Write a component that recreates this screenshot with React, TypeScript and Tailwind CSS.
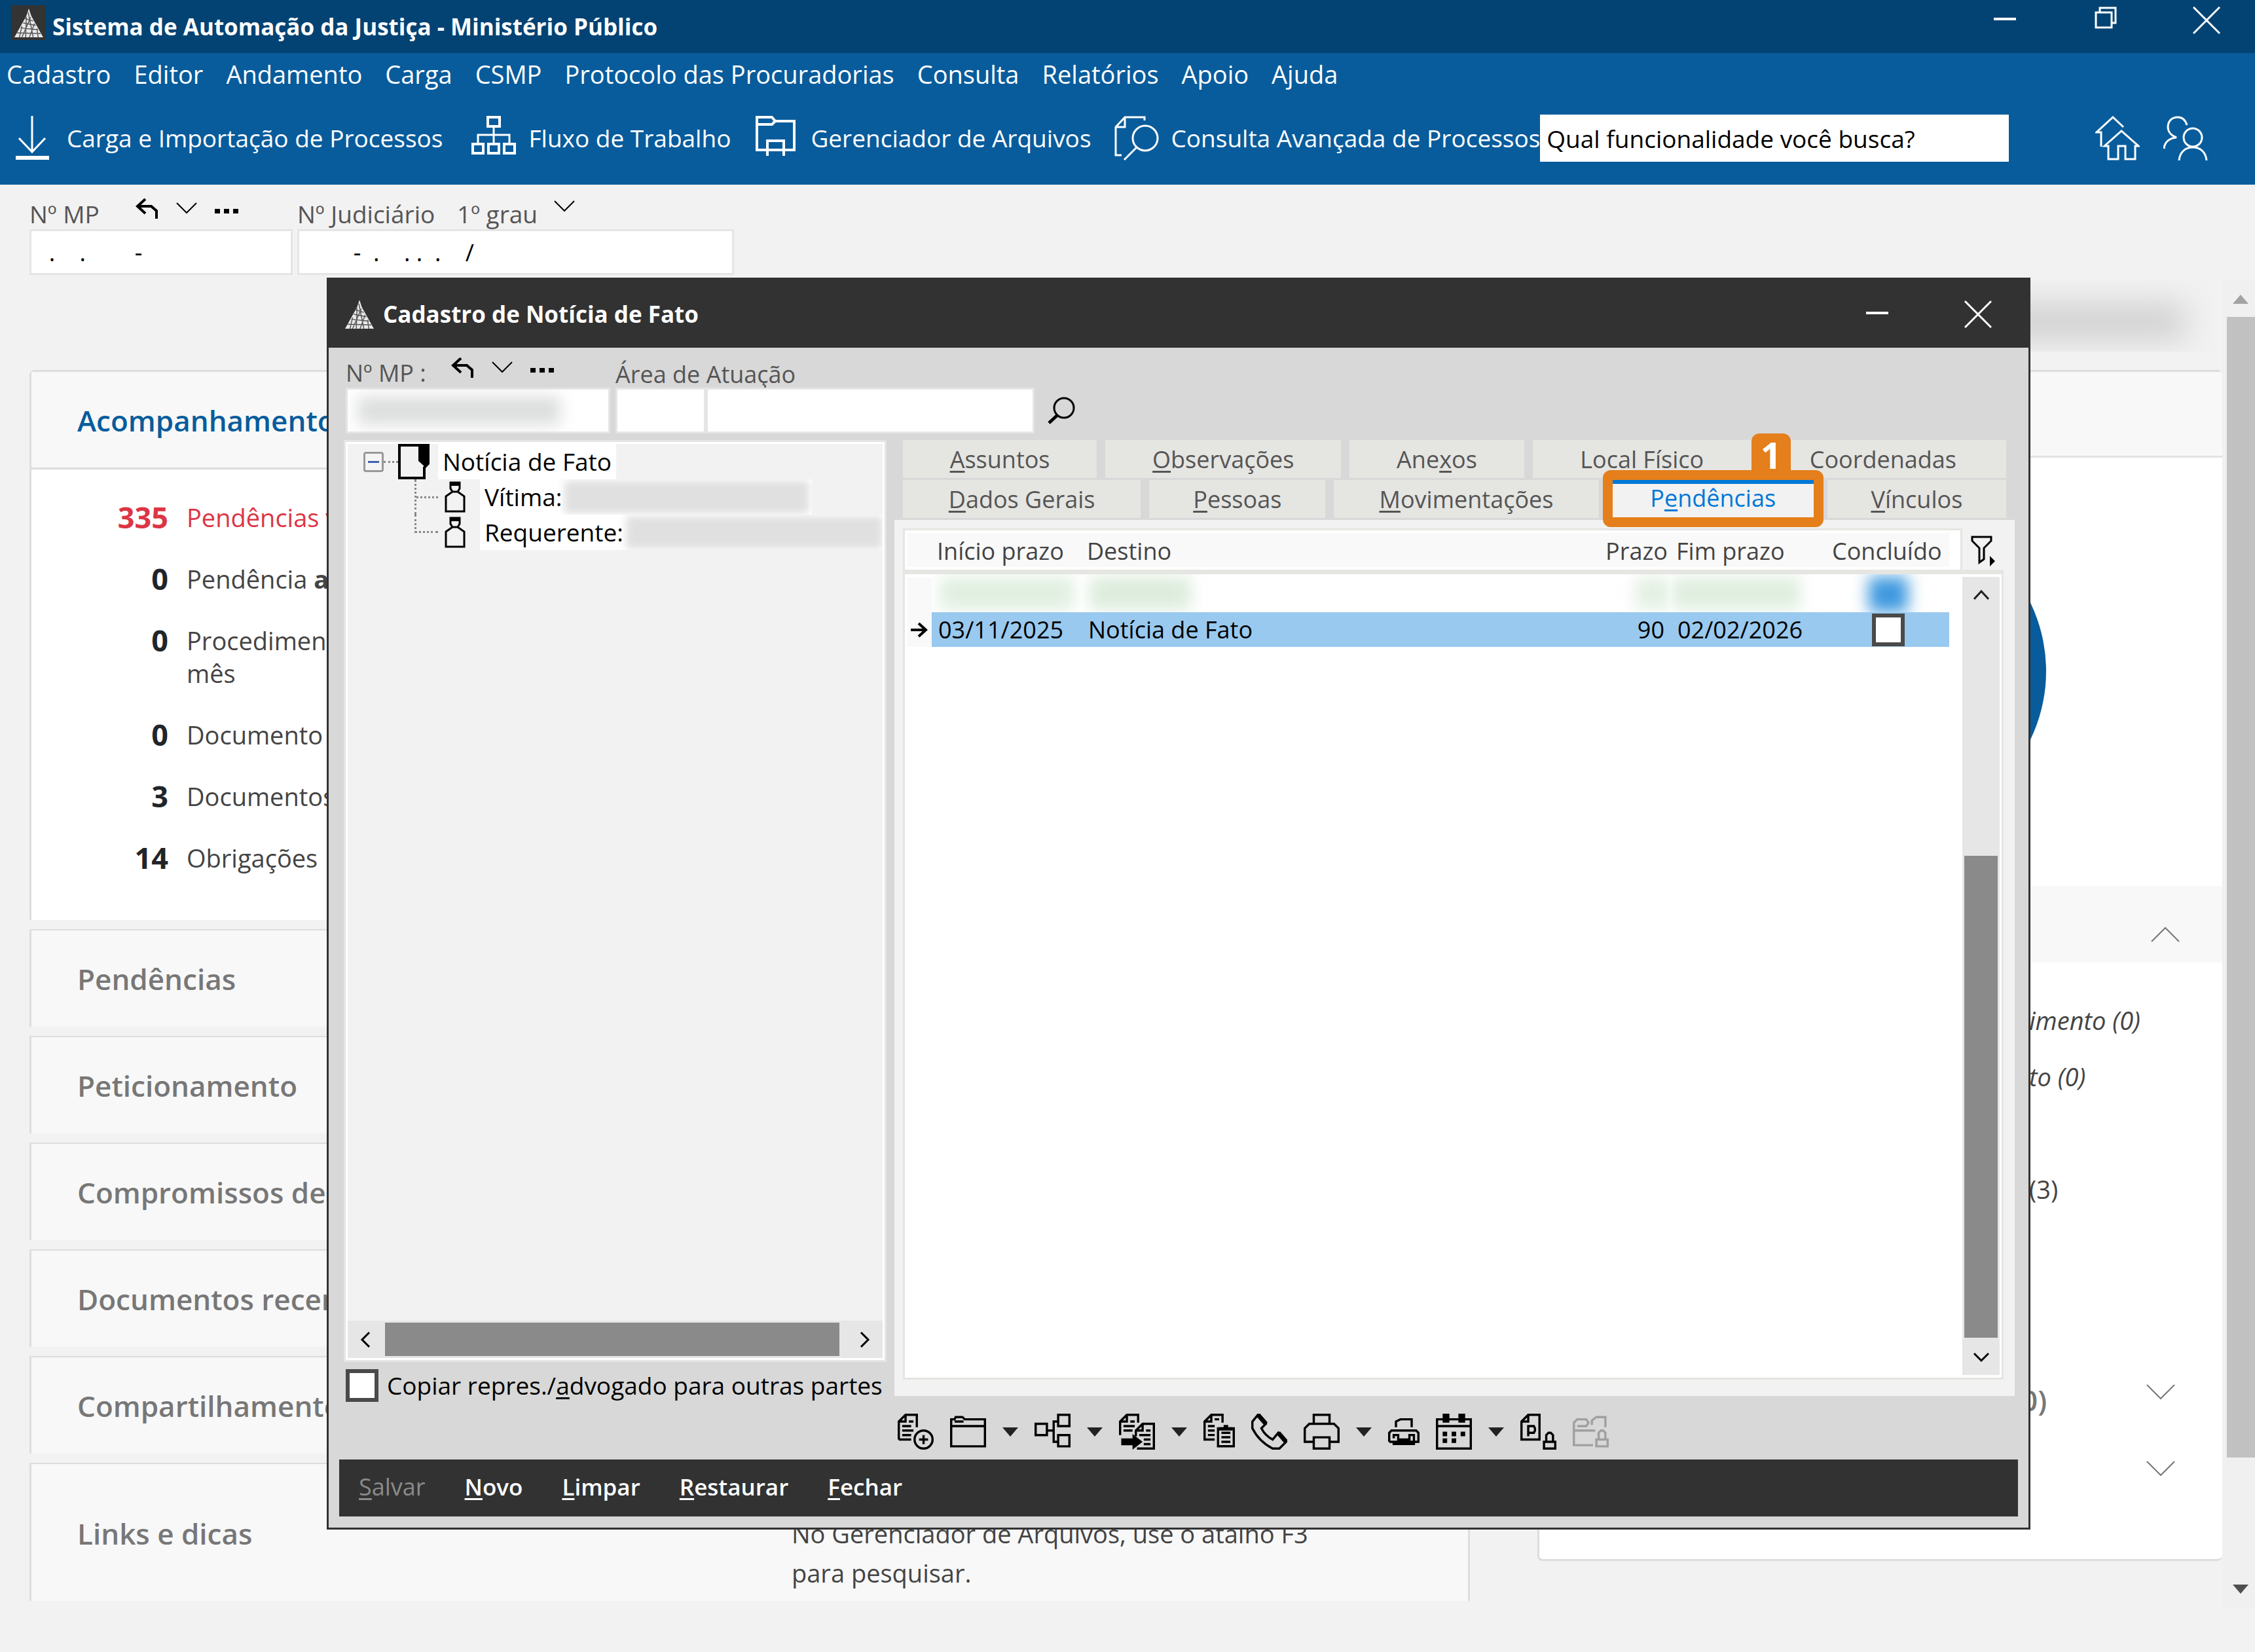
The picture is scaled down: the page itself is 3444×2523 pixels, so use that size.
import type { ReactNode } from "react";

const menuItems = [
  "Cadastro",
  "Editor",
  "Andamento",
  "Carga",
  "CSMP",
  "Protocolo das Procuradorias",
  "Consulta",
  "Relatórios",
  "Apoio",
  "Ajuda",
];

const followUps: { count: number; label: ReactNode; alert?: boolean }[] = [
  { count: 335, label: "Pendências vencidas", alert: true },
  {
    count: 0,
    label: (
      <>
        Pendência <b>a</b>
      </>
    ),
  },
  {
    count: 0,
    label: (
      <>
        Procedimentos
        <br />
        mês
      </>
    ),
  },
  { count: 0, label: "Documento" },
  { count: 3, label: "Documentos" },
  { count: 14, label: "Obrigações" },
];

const collapsedCards = [
  "Pendências",
  "Peticionamento",
  "Compromissos de",
  "Documentos recentes",
  "Compartilhamento",
];

function Logo() {
  return (
    <svg viewBox="0 0 46 46" className="size-[44px]" aria-hidden="true">
      <path d="M23 0L27 12L46 46H0L19 12Z" fill="#e8e8e8" />
      <path
        d="M17 16L30 20M14 23L34 27M10 31L38 34M4 39L42 40M22 6L30 46M19 13L18 46M26 14L12 46M32 24L24 46M12 28L8 46M36 32L38 46"
        stroke="#555"
        strokeWidth="1.5"
        fill="none"
      />
    </svg>
  );
}

function MinimizeIcon() {
  return (
    <svg viewBox="0 0 34 42" className="h-[42px] w-[34px]" aria-hidden="true">
      <path d="M0 19H34" stroke="white" strokeWidth="4" />
    </svg>
  );
}

function CloseIcon() {
  return (
    <svg viewBox="0 0 42 42" className="size-[42px]" aria-hidden="true">
      <path d="M1 1L41 41M41 1L1 41" stroke="white" strokeWidth="3" />
    </svg>
  );
}

function DownloadIcon() {
  return (
    <svg viewBox="0 0 68 68" className="size-[68px]" fill="none" stroke="white" strokeWidth="3" aria-hidden="true">
      <path d="M34 0V54M14 34L34 55L54 34" />
      <path d="M9 64H60" strokeWidth="6" />
    </svg>
  );
}

function WorkflowIcon() {
  return (
    <svg viewBox="0 0 68 68" className="size-[68px]" fill="none" stroke="white" strokeWidth="3" aria-hidden="true">
      <path d="M25 2H43V16H25ZM2 43H18V57H2ZM26 43H42V57H26ZM50 43H66V57H50Z" strokeWidth="4" />
      <path d="M34 16V43M10 43V29H58V43" />
    </svg>
  );
}

function FileManagerIcon() {
  return (
    <svg viewBox="0 0 68 68" className="size-[68px]" fill="none" stroke="white" strokeWidth="4" aria-hidden="true">
      <path d="M5 2H28L33 8H62V52H5ZM5 13H28L33 8" />
      <path d="M21 61V38H46V61" />
    </svg>
  );
}

function AdvancedSearchIcon() {
  return (
    <svg viewBox="0 0 68 68" className="size-[68px]" fill="none" stroke="white" strokeWidth="3" aria-hidden="true">
      <path d="M46 7V2H16L2 17V60H11M16 2V17H2" />
      <circle cx="47" cy="34" r="19" />
      <path d="M34 48L15 67" />
    </svg>
  );
}

function HomeIcon() {
  return (
    <svg viewBox="0 0 68 68" className="size-[68px]" fill="none" stroke="white" strokeWidth="3" aria-hidden="true">
      <path d="M9 47V25H2L27 2L43 17M14 46L40 23L66 46H61V66H46V46H35V66H20V46Z" />
    </svg>
  );
}

function UsersIcon() {
  return (
    <svg viewBox="0 0 68 68" className="size-[68px]" fill="none" stroke="white" strokeWidth="3" aria-hidden="true">
      <path d="M36 14C33 4 27 2 22 2C13 2 7 8 7 17C7 24 12 30 20 33C9 34 2 40 1 50" />
      <circle cx="45" cy="33" r="14" />
      <path d="M24 68C25 56 33 48 45 48C57 48 65 56 66 68" />
    </svg>
  );
}

// Small undo / expand / more cluster next to a case number
function CaseNumberActions() {
  return (
    <div className="flex h-[38px] items-center gap-[27px]">
      <button aria-label="Desfazer">
        <svg viewBox="0 0 35 32" className="h-[32px] w-[35px]" fill="none" stroke="black" strokeWidth="4" aria-hidden="true">
          <path d="M15 1L3 12L15 23M3 12H24L32 19V31" />
        </svg>
      </button>
      <button aria-label="Expandir">
        <Chevron />
      </button>
      <button aria-label="Mais opções">
        <svg viewBox="0 0 36 32" className="h-[32px] w-[36px]" aria-hidden="true">
          <path d="M0 16h8v7H0zM14 16h8v7h-8zM28 16h8v7h-8z" />
        </svg>
      </button>
    </div>
  );
}

function Chevron() {
  return (
    <svg viewBox="0 0 32 32" className="size-[32px]" fill="none" stroke="black" strokeWidth="2" aria-hidden="true">
      <path d="M1 7L16 22L31 7" />
    </svg>
  );
}

function PanelChevron({ up = false }: { up?: boolean }) {
  return (
    <svg viewBox="0 0 44 24" className="h-[24px] w-[44px]" fill="none" stroke="#777" strokeWidth="2" aria-hidden="true">
      <path d={up ? "M1 23L22 2L43 23" : "M1 1L22 22L43 1"} />
    </svg>
  );
}

function PersonIcon() {
  return (
    <svg viewBox="0 0 32 48" className="h-[48px] w-[32px]" fill="none" stroke="black" strokeWidth="3" aria-hidden="true">
      <path d="M9 2H23V11L20 16H12L9 11ZM2 46V23L12 16H20L30 23V46Z" />
      <path d="M9 4H23" strokeWidth="6" />
    </svg>
  );
}

function Mnemonic({ text, at }: { text: string; at: number }) {
  return (
    <span>
      {text.slice(0, at)}
      <u className="decoration-3 underline-offset-4">{text[at]}</u>
      {text.slice(at + 1)}
    </span>
  );
}

function Tab({ text, at }: { text: string; at?: number }) {
  return (
    <button
      role="tab"
      aria-selected={false}
      className="flex h-[58px] items-center justify-center bg-[#e5e5e2] pt-[2px] text-[#555]"
    >
      {at === undefined ? text : <Mnemonic text={text} at={at} />}
    </button>
  );
}

function ToolIcon({
  label,
  narrow = false,
  disabled = false,
  children,
}: {
  label: string;
  narrow?: boolean;
  disabled?: boolean;
  children: ReactNode;
}) {
  return (
    <button aria-label={label} disabled={disabled}>
      <svg
        viewBox={narrow ? "0 0 14 16" : "0 0 16 16"}
        className={narrow ? "h-[55px] w-[48px]" : "h-[55px] w-[55px]"}
        fill="none"
        stroke={disabled ? "#a0a0a0" : "black"}
        aria-hidden="true"
      >
        {children}
      </svg>
    </button>
  );
}

function DropArrow({ label }: { label: string }) {
  return (
    <button aria-label={label}>
      <svg viewBox="0 0 24 14" className="h-[14px] w-[24px]" aria-hidden="true">
        <path d="M0 0H24L12 14Z" fill="#222" />
      </svg>
    </button>
  );
}

function Header() {
  return (
    <header className="text-white">
      <div className="flex h-[81px] items-start justify-between bg-[#034373] pr-[53px] pl-[17px]">
        <div className="flex h-full items-center gap-[10px]">
          <span className="mb-3 flex size-[53px] items-center justify-center bg-[#333]">
            <Logo />
          </span>
          <h1 className="text-[35px] font-bold">Sistema de Automação da Justiça - Ministério Público</h1>
        </div>
        <div className="flex pt-[10px]">
          <button aria-label="Minimizar" className="mr-[120px]">
            <MinimizeIcon />
          </button>
          <button aria-label="Restaurar" className="mr-[116px] self-start">
            <svg viewBox="0 0 34 34" className="size-[34px]" fill="none" stroke="white" strokeWidth="3" aria-hidden="true">
              <path d="M2 9H26V32H2ZM8 9V2H32V25H26" />
            </svg>
          </button>
          <button aria-label="Fechar">
            <CloseIcon />
          </button>
        </div>
      </div>

      <div className="bg-[#085c9c]">
        <nav className="flex h-[64px] items-center gap-[35px] pl-[10px]">
          {menuItems.map((item) => (
            <a key={item} href="#" className="text-[38px]">
              {item}
            </a>
          ))}
        </nav>
        <div className="flex h-[137px] items-center pr-[72px] pb-[5px] pl-[15px] text-[37px]">
          <button className="flex items-center gap-[19px]">
            <DownloadIcon />
            Carga e Importação de Processos
          </button>
          <button className="ml-[44px] flex items-center gap-[19px]">
            <WorkflowIcon />
            Fluxo de Trabalho
          </button>
          <button className="ml-[35px] flex items-center gap-[19px]">
            <FileManagerIcon />
            Gerenciador de Arquivos
          </button>
          <button className="ml-[35px] flex items-center gap-[19px]">
            <AdvancedSearchIcon />
            Consulta Avançada de Processos
          </button>
          <input
            aria-label="Buscar funcionalidade"
            defaultValue="Qual funcionalidade você busca?"
            className="h-[72px] w-[716px] bg-white px-[10px] text-black"
          />
          <div className="ml-auto flex gap-[36px]">
            <button aria-label="Início">
              <HomeIcon />
            </button>
            <button aria-label="Usuários">
              <UsersIcon />
            </button>
          </div>
        </div>
      </div>
    </header>
  );
}

function CaseFilters() {
  return (
    <div className="flex h-[145px] gap-[7px] pt-[18px] pl-[45px] text-[37px] text-[#555]">
      <div className="w-[402px]">
        <div className="flex h-[50px]">
          <label htmlFor="numero-mp" className="w-[162px] leading-[54px]">
            Nº MP
          </label>
          <CaseNumberActions />
        </div>
        <input
          id="numero-mp"
          defaultValue="  .    .        -"
          className="h-[70px] w-full border-[3px] border-[#e5e5e5] bg-white px-2 text-[36px] text-black"
        />
      </div>
      <div className="w-[667px]">
        <div className="flex h-[50px]">
          <label htmlFor="numero-judiciario" className="w-[244px] leading-[54px]">
            Nº Judiciário
          </label>
          <span className="w-[148px] leading-[54px]">1º grau</span>
          <button aria-label="Escolher grau" className="h-[32px]">
            <Chevron />
          </button>
        </div>
        <input
          id="numero-judiciario"
          defaultValue="        -  .    . .  .    /"
          className="h-[70px] w-full border-[3px] border-[#e5e5e5] bg-white px-2 text-[36px] text-black"
        />
      </div>
    </div>
  );
}

function Dashboard() {
  return (
    <main className="flex min-h-0 flex-1 pb-[68px] pl-[45px]">
      <div className="grid min-w-0 flex-1 grid-cols-[2200fr_1046fr] gap-x-[103px]">
        <div className="mb-[10px] flex min-h-0 flex-col gap-[14px] overflow-hidden pt-[138px]">
          <section className="shrink-0 rounded-t-lg border-[3px] border-b-0 border-[#ddd] bg-white">
            <h2 className="flex h-[149px] items-center border-b-[3px] border-[#ddd] bg-[#f8f8f8] pt-[2px] pl-[70px] text-[44px] font-semibold text-[#085c9c]">
              Acompanhamento
            </h2>
            <ul className="flex flex-col gap-[44px] pt-[48px] pb-[70px] text-[38px] text-[#444]">
              {followUps.map((item, index) => (
                <li
                  key={index}
                  className={item.alert ? "flex gap-[28px] text-[#dc3545]" : "flex gap-[28px]"}
                >
                  <span
                    className={
                      item.alert
                        ? "w-[209px] text-right text-[45px] leading-[50px] font-bold"
                        : "w-[209px] text-right text-[45px] leading-[50px] font-bold text-[#212529]"
                    }
                  >
                    {item.count}
                  </span>
                  <span className="leading-[50px]">{item.label}</span>
                </li>
              ))}
            </ul>
          </section>

          {collapsedCards.map((title) => (
            <section
              key={title}
              className="flex h-[149px] shrink-0 items-center border-t-2 border-l-[3px] border-[#ddd] bg-[#f8f8f8] pl-[70px]"
            >
              <h2 className="text-[44px] font-semibold text-[#777]">{title}</h2>
            </section>
          ))}

          <section className="flex shrink-0 items-start border-x-[3px] border-t-2 border-[#ddd] bg-[#f8f8f8] py-[76px] pl-[70px] leading-[60px]">
            <h2 className="w-[1091px] text-[44px] font-semibold text-[#777]">Links e dicas</h2>
            <p className="w-[820px] text-[38px] text-[#444]">
              No Gerenciador de Arquivos, use o atalho F3 para pesquisar.
            </p>
          </section>
        </div>

        <div className="flex min-h-0 flex-col pb-[71px]">
          <div className="flex h-[110px] justify-end overflow-hidden pt-[36px] pr-14">
            <div className="h-[56px] w-[480px] bg-[#d0d0d0] blur-xl" />
          </div>
          <section className="mt-[28px] flex-1 rounded-lg border-y-[3px] border-l-[3px] border-[#ddd] bg-white text-[38px] text-[#444]">
            <div className="h-[131px] border-b-[3px] border-[#e6e2e2] bg-[#f8f8f8]" />
            <div className="flex h-[654px] justify-center overflow-hidden pt-[86px]">
              <div className="ml-[24px] size-[480px] rounded-full bg-[#085c9c]" />
            </div>
            <div className="flex h-[117px] items-center justify-end bg-[#f8f8f8] pt-[30px] pr-[65px]">
              <button aria-label="Recolher">
                <PanelChevron up />
              </button>
            </div>
            <div className="flex flex-col gap-[26px] pt-[58px] pl-[748px] leading-[60px]">
              <p className="italic">imento (0)</p>
              <p className="italic">to (0)</p>
              <p className="pt-[86px]">(3)</p>
            </div>
            <div className="mt-[262px] flex h-[60px] items-center justify-between pr-[72px] pl-[736px]">
              <span className="text-[44px] font-semibold text-[#777]">0)</span>
              <button aria-label="Expandir" className="mb-6">
                <PanelChevron />
              </button>
            </div>
            <div className="mt-[57px] flex h-[60px] items-center justify-end pr-[72px]">
              <button aria-label="Expandir" className="mb-6">
                <PanelChevron />
              </button>
            </div>
          </section>
        </div>
      </div>

      {/* Page scrollbar */}
      <div className="flex w-[50px] flex-col items-end bg-[#f0f0f0]">
        <svg viewBox="0 0 43 57" className="h-[57px] w-[43px]" aria-hidden="true">
          <path d="M9 37L21 23L33 37Z" fill="#a3a3a3" />
        </svg>
        <div className="w-[43px] flex-1 bg-[#c1c1c1]" />
        <svg viewBox="0 0 43 229" className="h-[229px] w-[43px]" aria-hidden="true">
          <path d="M9 194L21 208L33 194Z" fill="#505050" />
        </svg>
      </div>
    </main>
  );
}

function PartiesTree() {
  return (
    <div className="flex w-[829px] flex-col text-[37px]">
      <div className="flex flex-1 flex-col border-[3px] border-[#e5e5e5] bg-white p-[3px]">
        <div className="flex-1 overflow-hidden bg-[#f2f2f2]">
          <div className="flex h-[54px] items-center pl-[24px]">
            <button
              aria-label="Recolher"
              className="flex size-[31px] items-center justify-center rounded-sm border-[3px] border-[#999] bg-[#f4f4f4]"
            >
              <span className="h-[3px] w-[17px] bg-[#4060b0]" />
            </button>
            <span className="w-[22px] border-t-[3px] border-dotted border-[#888]" />
            <svg viewBox="0 0 48 54" className="h-[54px] w-[48px]" aria-hidden="true">
              <path d="M2 2H46V30L40 36V52H2Z" fill="none" stroke="black" strokeWidth="4" />
              <path d="M31 0H48V26L40 34L31 26Z" />
            </svg>
            <span className="ml-[13px] h-[54px] bg-white px-[7px] leading-[54px]">Notícia de Fato</span>
          </div>
          <div className="ml-[102px] flex h-[54px] items-center border-l-[3px] border-dotted border-[#888]">
            <span className="w-[33px] border-t-[3px] border-dotted border-[#888]" />
            <span className="ml-[10px]">
              <PersonIcon />
            </span>
            <span className="ml-[22px] flex h-[54px] items-center overflow-hidden bg-white pl-[7px]">
              Vítima:
              <span className="mx-1 h-[50px] w-[374px] bg-[#e0e0e0] blur-[6px]" />
            </span>
          </div>
          <div className="ml-[102px] flex h-[54px]">
            <span className="h-[28px] w-[36px] border-b-[3px] border-l-[3px] border-dotted border-[#888]" />
            <span className="ml-[10px] self-center">
              <PersonIcon />
            </span>
            <span className="ml-[22px] flex h-[54px] flex-1 items-center overflow-hidden bg-white pl-[7px]">
              Requerente:
              <span className="ml-1 h-[50px] flex-1 bg-[#e0e0e0] blur-[6px]" />
            </span>
          </div>
        </div>
        <div className="flex h-[57px] items-center bg-[#e6e6e6]">
          <button aria-label="Rolar para a esquerda" className="w-[57px]">
            <svg viewBox="0 0 57 24" className="h-[24px] w-[57px]" fill="none" stroke="black" strokeWidth="3" aria-hidden="true">
              <path d="M33 1L22 12L33 23" />
            </svg>
          </button>
          <div className="h-[51px] w-[694px] bg-[#8a8a8a]" />
          <button aria-label="Rolar para a direita" className="ml-auto w-[57px]">
            <svg viewBox="0 0 57 24" className="h-[24px] w-[57px]" fill="none" stroke="black" strokeWidth="3" aria-hidden="true">
              <path d="M24 1L35 12L24 23" />
            </svg>
          </button>
        </div>
      </div>
      <label className="mt-[11px] flex h-[50px] items-center gap-[13px] pl-[3px] whitespace-nowrap">
        <input
          type="checkbox"
          className="size-[50px] shrink-0 appearance-none border-[6px] border-[#4a4a4a] bg-white"
        />
        <Mnemonic text="Copiar repres./advogado para outras partes" at={15} />
      </label>
    </div>
  );
}

function DeadlinesTable() {
  return (
    <div className="flex flex-1">
      <div className="flex-1 border-y-[3px] border-l-[3px] border-[#e5e5e2] bg-white">
        <table className="w-full table-fixed border-separate border-spacing-0 text-left">
          <colgroup>
            <col className="w-[41px]" />
            <col className="w-[229px]" />
            <col />
            <col className="w-[105px]" />
            <col className="w-[238px]" />
            <col className="w-[187px]" />
            <col className="w-[20px]" />
          </colgroup>
          <thead className="text-[#444]">
            <tr className="h-[60px]">
              <th className="border-y-[4px] border-l-[4px] border-white bg-[#f9f9f9]" />
              <th className="border-y-[4px] border-white bg-[#f9f9f9] pt-[4px] pl-[8px] font-normal">Início prazo</th>
              <th className="border-y-[4px] border-white bg-[#f9f9f9] pt-[4px] pl-[8px] font-normal">Destino</th>
              <th className="border-y-[4px] border-white bg-[#f9f9f9] pt-[4px] pr-[5px] text-right font-normal">Prazo</th>
              <th className="border-y-[4px] border-white bg-[#f9f9f9] pt-[4px] pl-[8px] font-normal">Fim prazo</th>
              <th className="border-y-[4px] border-white bg-[#f9f9f9] pt-[4px] pl-[8px] font-normal">Concluído</th>
              <th className="border-r-[3px] border-[#e5e5e2]" />
            </tr>
          </thead>
          <tbody className="text-black">
            <tr aria-hidden="true">
              <td colSpan={7} className="h-[7px] bg-[#e5e5e2] p-0" />
            </tr>
            {/* Concealed row */}
            <tr className="h-[58px]">
              <td className="border-t-[5px] border-l-[4px] border-white bg-[#f9f9f9] p-0" />
              <td className="overflow-hidden p-0">
                <div className="mx-[12px] h-[50px] bg-[#e0efe0] blur-md" />
              </td>
              <td className="overflow-hidden p-0">
                <div className="ml-[12px] h-[50px] w-[155px] bg-[#dcecdc] blur-md" />
              </td>
              <td className="overflow-hidden p-0">
                <div className="ml-[50px] h-[50px] bg-[#e4f0e4] blur-md" />
              </td>
              <td className="overflow-hidden p-0">
                <div className="mr-[40px] h-[50px] bg-[#dfeedf] blur-md" />
              </td>
              <td className="overflow-hidden p-0 align-bottom">
                <div className="mx-auto h-[54px] w-[60px] bg-[#3d98df] blur-md" />
              </td>
              <td />
            </tr>
            <tr className="h-[53px]">
              <td className="border-l-[4px] border-white bg-[#f9f9f9] p-0">
                <svg viewBox="0 0 36 26" className="h-[26px] w-[36px]" fill="none" stroke="black" strokeWidth="4" aria-hidden="true">
                  <path d="M5 13H27M17 3L28 13L17 23" />
                </svg>
              </td>
              <td className="bg-[#99c9ef] p-0 pl-[10px]">03/11/2025</td>
              <td className="bg-[#99c9ef] p-0 pl-[10px]">Notícia de Fato</td>
              <td className="bg-[#99c9ef] p-0 pr-[10px] text-right">90</td>
              <td className="bg-[#99c9ef] p-0 pl-[10px]">02/02/2026</td>
              <td className="bg-[#99c9ef] p-0">
                <input
                  type="checkbox"
                  aria-label="Concluído"
                  className="mx-auto block size-[50px] appearance-none border-[6px] border-[#4a4a4a] bg-white"
                />
              </td>
              <td />
            </tr>
          </tbody>
        </table>
      </div>

      <div className="flex w-[63px] flex-col">
        <button aria-label="Filtrar" className="flex h-[63px] items-center justify-center pt-[6px]">
          <svg viewBox="0 0 38 48" className="h-[48px] w-[38px]" fill="none" stroke="black" strokeWidth="3" aria-hidden="true">
            <path d="M2 2H31V8L20 19V36L13 41V19L2 8Z" />
            <path d="M29 31L37 39L29 47Z" fill="black" stroke="none" />
          </svg>
        </button>
        <div className="flex flex-1 flex-col border-t-[7px] border-r-[3px] border-b-[3px] border-[#e5e5e2] bg-white py-[4px] pr-[3px]">
          <div className="flex flex-1 flex-col items-center bg-[#e6e6e6]">
            <svg viewBox="0 0 24 54" className="h-[54px] w-[24px]" fill="none" stroke="#222" strokeWidth="3" aria-hidden="true">
              <path d="M1 34L12 22L23 34" />
            </svg>
            <div className="mt-auto h-[736px] w-[51px] bg-[#8a8a8a]" />
            <svg viewBox="0 0 24 57" className="h-[57px] w-[24px]" fill="none" stroke="black" strokeWidth="3" aria-hidden="true">
              <path d="M1 24L12 35L23 24" />
            </svg>
          </div>
        </div>
      </div>
    </div>
  );
}

function Toolbar() {
  return (
    <div className="flex h-[97px] items-center gap-[25px] pt-[12px] pl-[5px]">
      <ToolIcon label="Incluir documento">
        <path d="M.5 11.5V3.5L3.5.5H8.5V6M3.5.5V3.5H.5M.5 11.5H6M5 3.5H7M2 5.5H6M2 7.5H7M2 9.5H6" />
        <circle cx="11.5" cy="11.5" r="4" />
        <path d="M11.5 9.5V13.5M9.5 11.5H13.5" />
      </ToolIcon>
      <ToolIcon label="Pasta">
        <path d="M.5 14.5V2.5H2L2.5 1.5H5.5L6.5 2.5H15.5V14.5ZM.5 5.5H15.5M2 3.5H6" />
      </ToolIcon>
      <DropArrow label="Opções da pasta" />
      <ToolIcon label="Vínculos do processo">
        <path d="M.5 4.5H5.5V9.5H.5ZM10.5.5H15.5V5.5H10.5ZM10.5 9.5H15.5V14.5H10.5ZM6 7.5H8.5M10 3.5H8.5V12.5H10" />
      </ToolIcon>
      <DropArrow label="Opções de vínculos" />
      <ToolIcon label="Mover documentos">
        <path d="M.5 9.5V3.5L3.5.5H8.5V4M3.5.5V3.5H.5M5 3.5H7M2 5.5H7M2 7.5H6M7.5 10V7.5L10.5 4.5H15.5V15.5H8M10.5 4.5V7.5H7.5M12 7.5H14M9 9.5H14M11 11.5H14M11 13.5H14" />
        <path d="M1 11H6V9L10.5 12.5L6 16V14H1Z" fill="black" stroke="none" />
      </ToolIcon>
      <DropArrow label="Opções de movimentação" />
      <ToolIcon label="Copiar documento" narrow>
        <path d="M5 11.5H.5V3.5L3.5.5H8.5V4M3.5.5V3.5H.5M5 2.5H7M2 5.5H5M2 7.5H5M2 9.5H5M6.5 6.5H13.5V14.5H6.5ZM8 8.5H12M8 10.5H12M8 12.5H12" />
        <path d="M7 6H9V5H11V6H13V7.5H7Z" fill="black" stroke="none" />
      </ToolIcon>
      <ToolIcon label="Telefone">
        <path d="M3 .5L.5 3.5V6.5C2.5 10.5 5.5 13.5 9.5 15.5H12.5L15.5 12.5L12 8.5L9.5 11.5C7.5 10.5 5.5 8.5 4.5 6.5L6.5 4.5Z" />
        <path d="M3 .5L6.5 4.5M12 8.5L15.5 12.5" strokeWidth="2" />
      </ToolIcon>
      <ToolIcon label="Imprimir">
        <path d="M4.5 5V.5H11.5V5M4 12.5H.5V6.5L2.5 4.5H13.5L15.5 6.5V12.5H12M4.5 10.5H11.5V15.5H4.5Z" />
      </ToolIcon>
      <DropArrow label="Opções de impressão" />
      <ToolIcon label="Imprimir etiqueta" narrow>
        <path d="M3.5 6V3.5L5.5 2.5H10.5V6M2 13.5H12M.5 12.5V8.5L1.5 7.5H12.5L13.5 8.5V12.5H.5M2.5 11V9.5H4.5V11.5H9.5V9.5H11.5V12" />
      </ToolIcon>
      <ToolIcon label="Agenda">
        <path d="M.5 2.5H15.5V15.5H.5ZM.5 5.5H15.5" />
        <path d="M3 0H6V4H3ZM10 0H13V4H10ZM3 8H5V10H3ZM7 8H9V10H7ZM11 8H13V10H11ZM3 11H5V13H3ZM7 11H9V13H7Z" fill="black" stroke="none" />
      </ToolIcon>
      <DropArrow label="Opções da agenda" />
      <ToolIcon label="Bloquear processo">
        <path d="M.5 11.5V3.5L3.5.5H8.5V11.5ZM3.5.5V3.5H.5M3.5 10V5.5H6L6.5 6.5V7.5L6 8.5H3.5M10.5 12.5H15.5V15.5H10.5ZM11.5 12V9.5L12.5 8.5H13.5L14.5 9.5V12" />
      </ToolIcon>
      <ToolIcon label="Bloquear pasta" disabled>
        <path d="M9 14H.5V4L2 2.5H6L7 4L6 5.5H2M.5 7.5H10M8.5 5V3L10.5 1.5H14.5V6M10.5 11.5H15.5V14.5H10.5ZM11.5 11V8.5L12.5 7.5H13.5L14.5 8.5V11" />
      </ToolIcon>
    </div>
  );
}

function CaseDialog() {
  return (
    <div
      role="dialog"
      aria-label="Cadastro de Notícia de Fato"
      className="absolute top-[424px] right-[343px] bottom-[187px] left-[499px] flex flex-col border-[3px] border-[#323232] bg-[#d8d8d8] text-black"
    >
      <div className="flex h-[104px] items-center justify-between bg-[#323232] pt-[2px] pr-[56px] pl-[25px] text-white">
        <div className="flex items-center gap-[14px]">
          <Logo />
          <h2 className="text-[35px] font-bold">Cadastro de Notícia de Fato</h2>
        </div>
        <div className="flex gap-[116px]">
          <button aria-label="Minimizar">
            <MinimizeIcon />
          </button>
          <button aria-label="Fechar">
            <CloseIcon />
          </button>
        </div>
      </div>

      <div className="flex h-[141px] gap-[8px] pt-[12px] pl-[26px] text-[#555]">
        <div className="w-[404px]">
          <div className="flex h-[49px]">
            <label htmlFor="dialog-mp" className="w-[161px] leading-[54px]">
              Nº MP :
            </label>
            <CaseNumberActions />
          </div>
          {/* The case number is concealed */}
          <div className="grid h-[70px] items-center overflow-hidden">
            <input
              id="dialog-mp"
              className="col-start-1 row-start-1 h-[70px] w-full border-[3px] border-[#e5e5e5] bg-white"
            />
            <div className="col-start-1 row-start-1 ml-[18px] h-[44px] w-[310px] bg-[#dcdedd] blur-md" />
          </div>
        </div>
        <div>
          <label htmlFor="area-codigo" className="block h-[49px] leading-[58px]">
            Área de Atuação
          </label>
          <div className="flex items-center">
            <input
              id="area-codigo"
              className="h-[70px] w-[138px] border-[3px] border-[#e5e5e5] bg-white"
            />
            <input
              aria-label="Descrição da área de atuação"
              className="h-[70px] w-[502px] border-[3px] border-[#e5e5e5] bg-white"
            />
            <button aria-label="Pesquisar área" className="ml-[20px]">
              <svg viewBox="0 0 42 42" className="size-[42px]" fill="none" stroke="black" aria-hidden="true">
                <circle cx="25" cy="17" r="15" strokeWidth="3" />
                <path d="M15 28L2 40" strokeWidth="5" />
              </svg>
            </button>
          </div>
        </div>
      </div>

      <div className="flex flex-1 gap-[12px] pr-[21px] pl-[23px]">
        <div className="flex pb-[88px]">
          <PartiesTree />
        </div>
        <div className="flex min-w-0 flex-1 flex-col">
          <div role="tablist" className="flex flex-col gap-[3px] px-[13px]">
            <div className="grid grid-cols-[296fr_360fr_266fr_334fr_376fr] gap-[13px]">
              <Tab text="Assuntos" at={0} />
              <Tab text="Observações" at={0} />
              <Tab text="Anexos" at={3} />
              <Tab text="Local Físico" />
              <Tab text="Coordenadas" />
            </div>
            <div className="grid grid-cols-[363fr_269fr_404fr_323fr_273fr] gap-[13px]">
              <Tab text="Dados Gerais" at={0} />
              <Tab text="Pessoas" at={0} />
              <Tab text="Movimentações" at={0} />
              <button
                role="tab"
                aria-selected
                className="relative flex h-[58px] items-center justify-center border-t-[6px] border-[#0078d7] bg-[#f2f2f2] pb-[8px] text-[#0078d7]"
              >
                <Mnemonic text="Pendências" at={1} />
                <span className="absolute -inset-x-[7px] -top-[21px] -bottom-[14px] rounded-xl border-[15px] border-[#e47f1b]" />
                <span className="absolute right-[43px] bottom-[65px] flex h-[64px] w-[60px] items-center justify-center rounded-t-xl bg-[#e47f1b] text-[56px] font-bold text-white">
                  1
                </span>
              </button>
              <Tab text="Vínculos" at={0} />
            </div>
          </div>
          <div className="mt-[3px] flex flex-1 bg-[#f2f2f2] pt-[13px] pr-[17px] pb-[25px] pl-[13px]">
            <DeadlinesTable />
          </div>
          <Toolbar />
        </div>
      </div>

      <div className="mx-[16px] mb-[17px] flex h-[87px] items-center gap-[60px] bg-[#323232] pb-[4px] pl-[30px] text-[35px] font-semibold text-white">
        <button disabled className="text-[36px] font-normal text-[#8a8a8a]">
          <Mnemonic text="Salvar" at={0} />
        </button>
        <button>
          <Mnemonic text="Novo" at={0} />
        </button>
        <button>
          <Mnemonic text="Limpar" at={0} />
        </button>
        <button>
          <Mnemonic text="Restaurar" at={0} />
        </button>
        <button>
          <Mnemonic text="Fechar" at={0} />
        </button>
      </div>
    </div>
  );
}

export default function App() {
  return (
    <div className="relative flex h-screen flex-col overflow-hidden bg-[#f2f2f2] font-['Open_Sans',sans-serif] text-[36px] leading-[48px]">
      <Header />
      <CaseFilters />
      <Dashboard />
      <CaseDialog />
    </div>
  );
}
